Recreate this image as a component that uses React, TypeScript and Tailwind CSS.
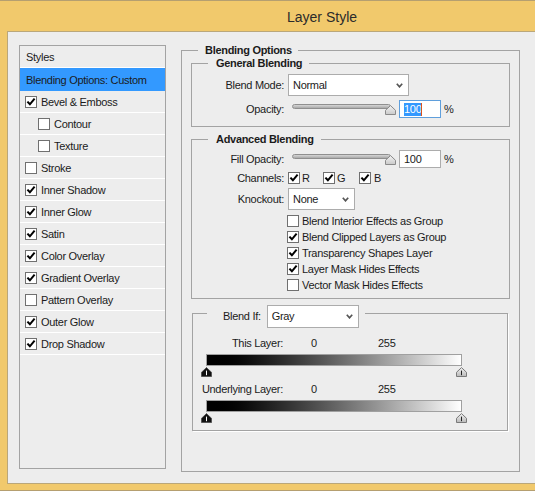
import React from 'react';
import { clsx } from 'clsx';

// Effects list on the left
const STYLE_ITEMS = [
  { label: 'Bevel & Emboss', checked: true, indent: false },
  { label: 'Contour', checked: false, indent: true },
  { label: 'Texture', checked: false, indent: true },
  { label: 'Stroke', checked: false, indent: false },
  { label: 'Inner Shadow', checked: true, indent: false },
  { label: 'Inner Glow', checked: true, indent: false },
  { label: 'Satin', checked: true, indent: false },
  { label: 'Color Overlay', checked: true, indent: false },
  { label: 'Gradient Overlay', checked: true, indent: false },
  { label: 'Pattern Overlay', checked: false, indent: false },
  { label: 'Outer Glow', checked: true, indent: false },
  { label: 'Drop Shadow', checked: true, indent: false },
];

const ADVANCED_OPTIONS = [
  { label: 'Blend Interior Effects as Group', checked: false },
  { label: 'Blend Clipped Layers as Group', checked: true },
  { label: 'Transparency Shapes Layer', checked: true },
  { label: 'Layer Mask Hides Effects', checked: true },
  { label: 'Vector Mask Hides Effects', checked: false },
];

function CheckBox({ checked }: { checked: boolean }) {
  return (
    <span className="flex h-[12px] w-[12px] shrink-0 items-center justify-center border border-[#707070] bg-white">
      {checked && (
        <svg width="10" height="10" viewBox="0 0 10 10">
          <path d="M1.4 4.6 L3.9 7.3 L8.6 1.6" fill="none" stroke="#000" strokeWidth="2" />
        </svg>
      )}
    </span>
  );
}

function Dropdown({ value, className }: { value: string; className?: string }) {
  return (
    <div className={clsx('flex items-center justify-between border border-[#acacac] bg-white pl-[4px] pr-[5px]', className)}>
      <span>{value}</span>
      <svg width="7" height="5" viewBox="0 0 7 5">
        <path d="M0.8 0.8 L3.5 3.8 L6.2 0.8" fill="none" stroke="#555" strokeWidth="1.7" />
      </svg>
    </div>
  );
}

function Slider({ className }: { className?: string }) {
  return (
    <div className={clsx('relative h-[18px] w-[105px]', className)}>
      <div className="absolute left-0 top-[4px] h-[5px] w-[99px] rounded-full border border-[#8f8f8f] bg-linear-to-b from-[#d6d6d6] to-[#a9a9a9]" />
      <svg className="absolute left-[93px] top-[5px]" width="11" height="10" viewBox="0 0 11 10">
        <defs>
          <linearGradient id="sthumb" x1="0" y1="0" x2="0" y2="1">
            <stop offset="0" stopColor="#f4f4f4" />
            <stop offset="1" stopColor="#c9c9c9" />
          </linearGradient>
        </defs>
        <path d="M0.5 9.5 V5.3 L5.5 0.6 L10.5 5.3 V9.5 Z" fill="url(#sthumb)" stroke="#8a8a8a" />
      </svg>
    </div>
  );
}

function NumberBox({ focused, className }: { focused?: boolean; className?: string }) {
  return (
    <div
      className={clsx(
        'flex h-[18px] w-[42px] items-center border bg-white pl-[4px]',
        focused ? 'border-[#5f9fdc]' : 'border-[#acacac]',
        className
      )}
    >
      {focused ? (
        <>
          <span className="bg-[#3399ff] text-white">100</span>
          <span className="h-[13px] w-[1px] bg-[#d9531e]" />
        </>
      ) : (
        <span>100</span>
      )}
    </div>
  );
}

function Thumb({ dark }: { dark?: boolean }) {
  return (
    <svg width="11" height="10" viewBox="0 0 11 10">
      <defs>
        <linearGradient id="lthumb" x1="0" y1="0" x2="0" y2="1">
          <stop offset="0" stopColor="#f2f2f2" />
          <stop offset="1" stopColor="#b9b9b9" />
        </linearGradient>
      </defs>
      <path
        d="M0.5 9.5 V5.3 L5.5 0.6 L10.5 5.3 V9.5 Z"
        fill={dark ? '#111' : 'url(#lthumb)'}
        stroke={dark ? '#555' : '#7a7a7a'}
      />
      <path d="M5.5 3.6 V8.2" stroke={dark ? '#fff' : '#222'} strokeWidth="1" />
    </svg>
  );
}

function GradientRange({ label }: { label: string }) {
  return (
    <>
      <div className="flex h-[14px] items-center">
        <span className="w-[90px] text-right">{label}</span>
        <span className="ml-[28px] w-[67px]">0</span>
        <span>255</span>
      </div>
      <div className="ml-[13px] mt-[4px] h-[12px] w-[256px] border border-[#a0a0a0] bg-linear-to-r from-black to-white" />
      <div className="ml-[8px] mt-[1px] flex h-[10px] w-[266px] justify-between">
        <Thumb dark />
        <Thumb />
      </div>
    </>
  );
}

export default function App() {
  return (
    <div className="h-[491px] w-[535px] overflow-hidden border-t border-b border-[#b59f70] bg-[#f1c96c] font-['Liberation_Sans',Arial,sans-serif] text-[11px] leading-[13px] tracking-[-0.3px] text-[#1b1b1b]">
      {/* Title bar */}
      <div className="flex h-[30px] items-center pl-[287px] pt-[2px] text-[14px] leading-[18px] tracking-normal text-[#2b2b2b]">
        Layer Style
      </div>

      {/* Dialog body */}
      <div className="ml-[7px] flex h-[453px] items-start border-l border-t border-b border-[#baa77a] bg-[#ededed] pl-[11px] pt-[13px]">
        {/* Styles list */}
        <div className="h-[424px] w-[147px] border border-[#a3a3a3]">
          <div className="flex h-[22px] items-center border-b border-white pl-[6px] pt-[1px]">Styles</div>
          <div className="flex h-[23px] items-center bg-[#3399ff] pl-[6px] pt-[2px]">Blending Options: Custom</div>
          {STYLE_ITEMS.map((item) => (
            <div
              key={item.label}
              className={clsx(
                'flex h-[22px] items-center gap-[4px] border-b border-white pt-[1px]',
                item.indent ? 'pl-[18px]' : 'pl-[5px]'
              )}
            >
              <CheckBox checked={item.checked} />
              <span>{item.label}</span>
            </div>
          ))}
        </div>

        {/* Blending Options */}
        <fieldset className="-mt-[1px] ml-[15px] h-[428px] w-[339px] border border-[#a3a3a3]">
          <legend className="ml-[16px] h-[13px] pl-[7px] pr-[6px] font-bold">Blending Options</legend>

          {/* General Blending */}
          <fieldset className="mx-[9px] border border-[#a3a3a3] pb-[8px]">
            <legend className="ml-[16px] h-[13px] pl-[8px] pr-[7px] font-bold">General Blending</legend>
            <div className="mt-[4px] flex h-[22px] items-center">
              <span className="w-[92px] text-right">Blend Mode:</span>
              <Dropdown value="Normal" className="ml-[4px] h-[22px] w-[121px]" />
            </div>
            <div className="mt-[4px] flex h-[18px] items-center">
              <span className="w-[92px] text-right">Opacity:</span>
              <Slider className="ml-[8px]" />
              <NumberBox focused className="ml-[2px]" />
              <span className="ml-[3px]">%</span>
            </div>
          </fieldset>

          {/* Advanced Blending */}
          <fieldset className="mx-[9px] mt-[6px] border border-[#a3a3a3] pb-[5px]">
            <legend className="ml-[16px] h-[13px] pl-[8px] pr-[7px] font-bold">Advanced Blending</legend>
            <div className="mt-[4px] flex h-[18px] items-center">
              <span className="w-[92px] text-right">Fill Opacity:</span>
              <Slider className="ml-[8px]" />
              <NumberBox className="ml-[2px]" />
              <span className="ml-[3px]">%</span>
            </div>
            <div className="mt-[4px] flex h-[12px] items-center">
              <span className="w-[92px] text-right">Channels:</span>
              <label className="ml-[4px] flex w-[35px] items-center gap-[2px]">
                <CheckBox checked />R
              </label>
              <label className="flex w-[36px] items-center gap-[2px]">
                <CheckBox checked />G
              </label>
              <label className="flex items-center gap-[3px]">
                <CheckBox checked />B
              </label>
            </div>
            <div className="mt-[4px] flex h-[22px] items-center">
              <span className="w-[92px] text-right">Knockout:</span>
              <Dropdown value="None" className="ml-[4px] h-[22px] w-[67px]" />
            </div>
            <div className="ml-[95px] mt-[3px]">
              {ADVANCED_OPTIONS.map((opt) => (
                <label key={opt.label} className="flex h-[16px] items-center gap-[3px]">
                  <CheckBox checked={opt.checked} />
                  <span>{opt.label}</span>
                </label>
              ))}
            </div>
          </fieldset>

          {/* Blend If */}
          <fieldset className="ml-[10px] mr-[11px] mt-[6px] border border-[#a3a3a3] pb-[7px] shadow-[1px_1px_0_#fff]">
            <legend className="ml-[14px] h-[17px] pl-[16px] pr-[6px]">
              <div className="flex h-[23px] items-center">
                <span>Blend If:</span>
                <Dropdown value="Gray" className="ml-[6px] h-[23px] w-[92px]" />
              </div>
            </legend>
            <div className="mt-[14px]">
              <GradientRange label="This Layer:" />
            </div>
            <div className="mt-[5px]">
              <GradientRange label="Underlying Layer:" />
            </div>
          </fieldset>
        </fieldset>
      </div>
    </div>
  );
}
